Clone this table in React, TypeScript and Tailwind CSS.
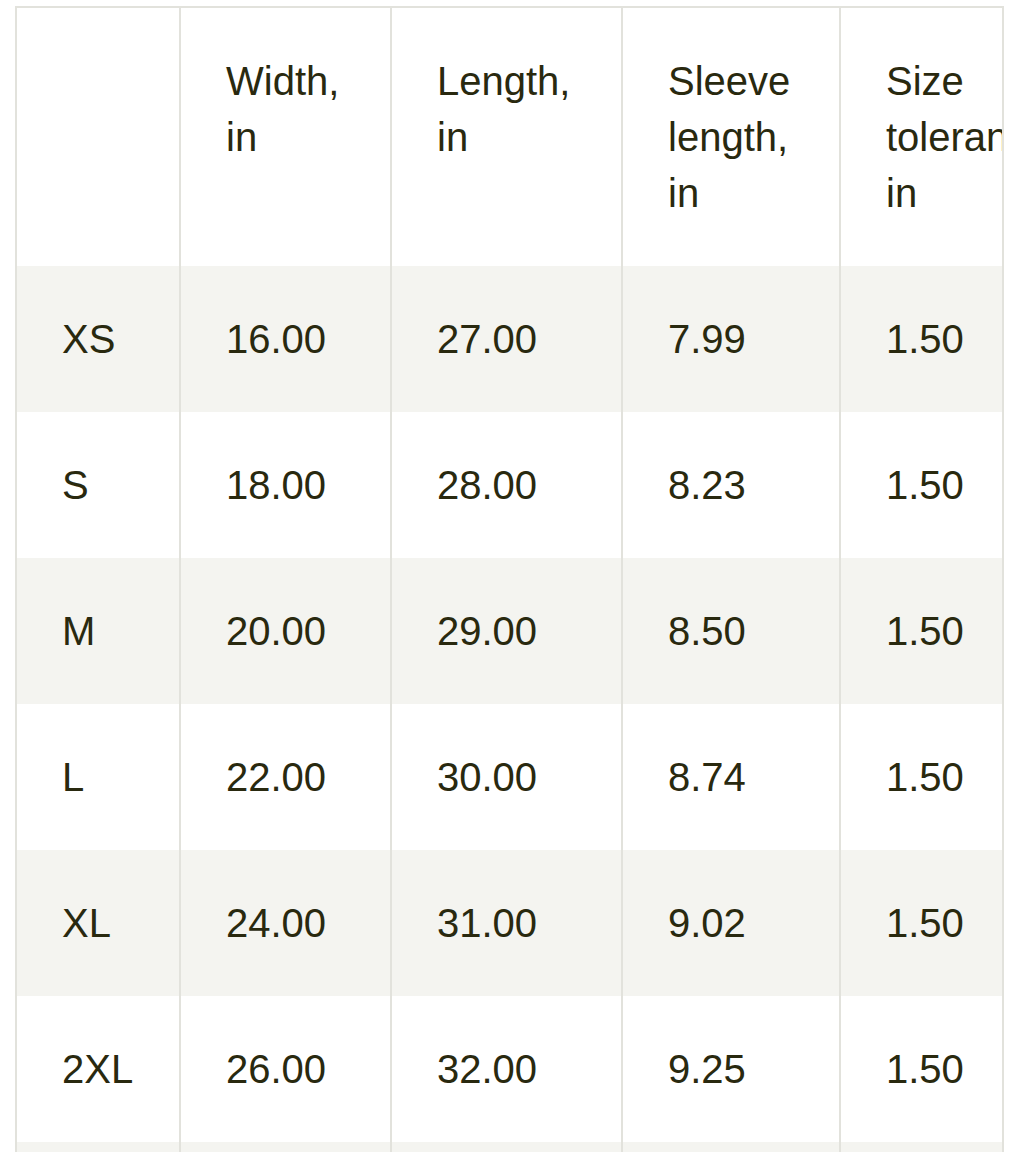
const headers = ["Width, in", "Length, in", "Sleeve length, in", "Size tolerance, in"];

const rows = [
  ["XS", "16.00", "27.00", "7.99", "1.50"],
  ["S", "18.00", "28.00", "8.23", "1.50"],
  ["M", "20.00", "29.00", "8.50", "1.50"],
  ["L", "22.00", "30.00", "8.74", "1.50"],
  ["XL", "24.00", "31.00", "9.02", "1.50"],
  ["2XL", "26.00", "32.00", "9.25", "1.50"],
  ["3XL", "28.00", "33.00", "9.49", "1.50"],
];

const widths = ["w-[164px]", "w-[211px]", "w-[231px]", "w-[218px]", "w-[300px]"];

const App = () => {
  return (
    <div className="min-h-screen bg-white pt-[6px] pl-[15px] font-['Liberation_Sans',Arial,sans-serif] text-[40px] leading-[56px] text-[#29290f]">
      <div className="w-[989px] h-[1146px] overflow-hidden border-t-2 border-l-2 border-r-2 border-[#e2e2dc]">
        <table className="table-fixed border-separate border-spacing-0 w-[1124px]">
          <thead>
            <tr>
              <th className={`${widths[0]} border-r-2 border-[#e2e2dc] px-[45px] pt-[45px] pb-[45px] text-left align-top font-normal`}></th>
              {headers.map((h, i) => (
                <th
                  key={h}
                  className={`${widths[i + 1]} border-r-2 border-[#e2e2dc] px-[45px] pt-[45px] pb-[45px] text-left align-top font-normal`}
                >
                  {h}
                </th>
              ))}
            </tr>
          </thead>
          <tbody>
            {rows.map((row, r) => (
              <tr key={row[0]} className={r % 2 === 0 ? "bg-[#f4f4f0]" : "bg-white"}>
                {row.map((cell, c) => (
                  <td
                    key={c}
                    className="border-r-2 border-[#e2e2dc] pl-[45px] pr-[44px] py-[45px] whitespace-nowrap"
                  >
                    {cell}
                  </td>
                ))}
              </tr>
            ))}
          </tbody>
        </table>
      </div>
    </div>
  );
};

export default App;
